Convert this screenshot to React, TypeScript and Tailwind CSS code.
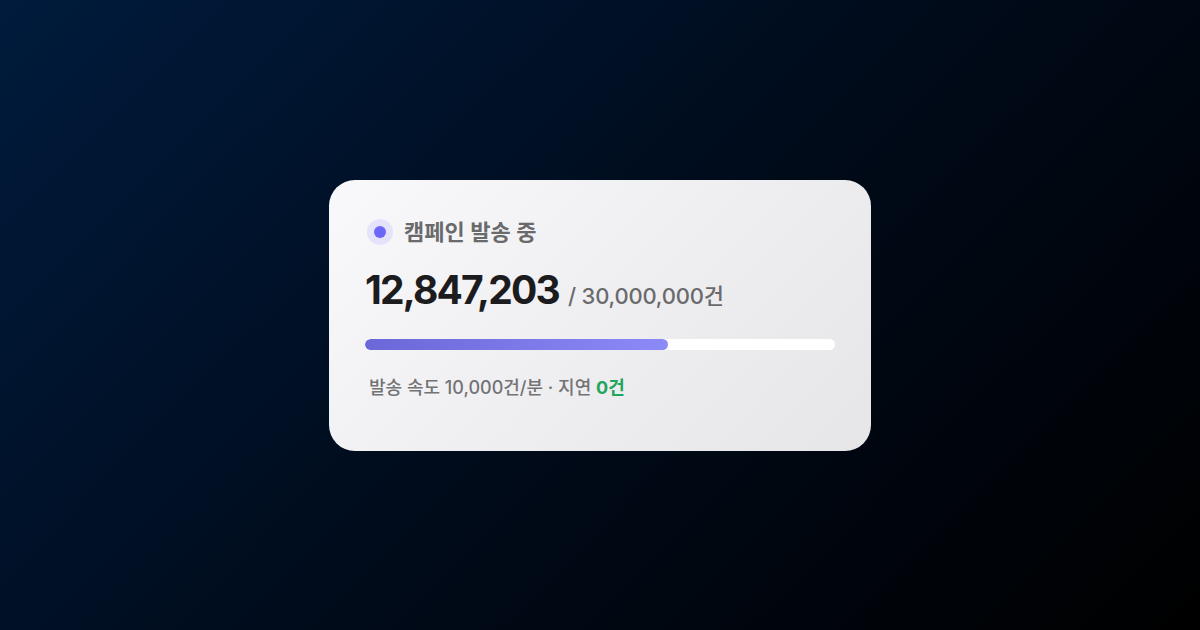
const font = { fontFamily: '"Inter", "Noto Sans CJK KR", sans-serif' };

export default function App() {
  const progress = 64.5;

  return (
    <div
      className="w-[1200px] h-[630px] flex items-center justify-center bg-[linear-gradient(135deg,#001b3d_0%,#000a18_55%,#000000_100%)]"
      style={font}
    >
      <div className="w-[542px] h-[271px] rounded-[26px] bg-[linear-gradient(135deg,#f9f9fb_0%,#ededef_60%,#e6e6e8_100%)] px-9 pt-[39px] flex flex-col">
        {/* status */}
        <div className="flex items-center gap-[11px] pl-[2px] h-[26px]">
          <div className="w-[26px] h-[26px] rounded-full bg-[#e5e3fb] flex items-center justify-center">
            <div className="w-[12px] h-[12px] rounded-full bg-[#6c67f6]" />
          </div>
          <span className="text-[22px] leading-[26px] font-semibold text-[#6a6a6c]">캠페인 발송 중</span>
        </div>

        {/* count */}
        <div className="flex items-baseline gap-[9px] mt-[25px]">
          <span className="text-[39px] leading-none font-bold text-[#1c1c1e] tracking-[-1.8px]">12,847,203</span>
          <span className="text-[22px] font-medium text-[#6a6a6c] tracking-[-0.2px]">/ 30,000,000건</span>
        </div>

        {/* bar */}
        <div className="mt-[26px] h-[11px] w-full rounded-full bg-white overflow-hidden">
          <div
            className="h-full rounded-full bg-[linear-gradient(90deg,#6a68d8_0%,#8c8af9_100%)]"
            style={{ width: `${progress}%` }}
          />
        </div>

        {/* footer */}
        <div className="mt-[26px] pl-1 text-[18px] leading-[24px] font-medium text-[#737375]">
          발송 속도 10,000건/분 · 지연 <span className="font-bold text-[#1fa65b]">0건</span>
        </div>
      </div>
    </div>
  );
}
